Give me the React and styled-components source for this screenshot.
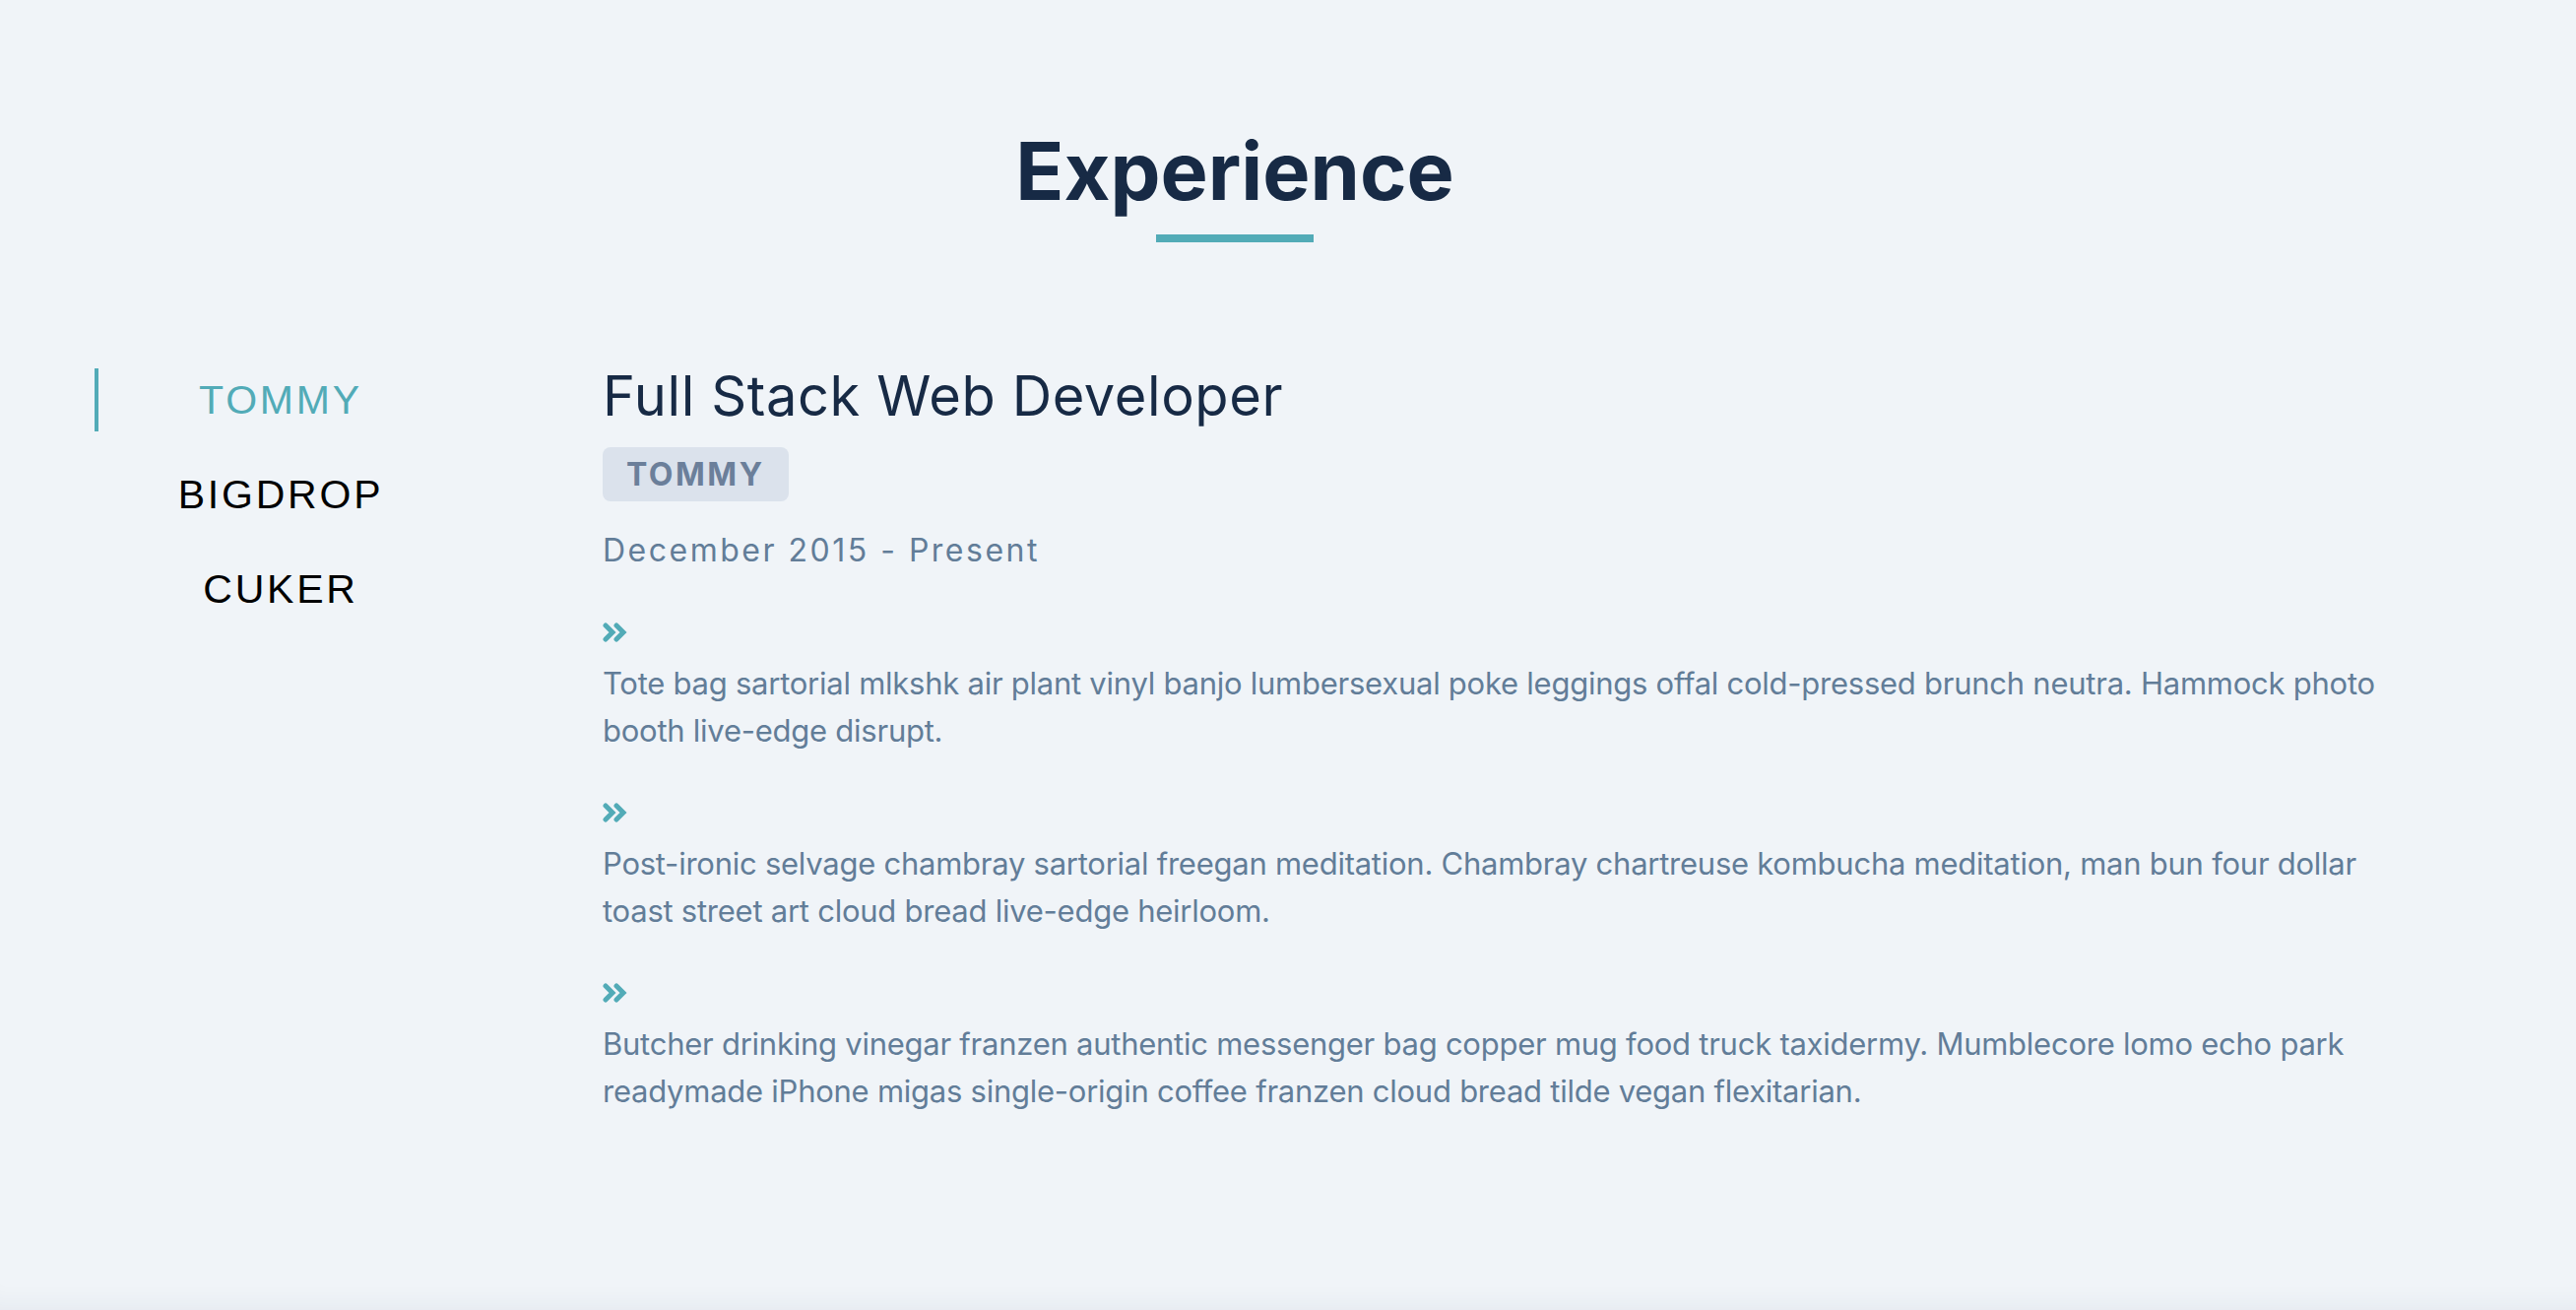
import styled, { createGlobalStyle } from "styled-components";

// --------------------------------------------------

const colors = {
	bg: "#f0f4f8",
	navy: "#172a45",
	teal: "#52abb7",
	muted: "#627d98",
	badge: "#dbe2ec",
	badgeText: "#6b7f9a",
};

const GlobalStyle = createGlobalStyle`
	html, body {
		margin: 0;
		padding: 0;
		background: ${colors.bg};
	}
	* {
		box-sizing: border-box;
	}
`;

const Page = styled.section`
	min-height: 1330px;
	padding: 134px 96px 0;
	background: ${colors.bg};
	box-shadow: inset 0 -26px 26px -22px rgba(30, 50, 80, 0.06);
	font-family: Inter, "Noto Sans", sans-serif;
`;

const Header = styled.header`
	display: flex;
	flex-direction: column;
	align-items: center;
	padding-right: 108px;
`;

const Title = styled.h2`
	margin: 0;
	font-size: 81px;
	line-height: 1;
	font-weight: 700;
	color: ${colors.navy};
`;

const Underline = styled.div`
	width: 160px;
	height: 8px;
	margin-top: 23px;
	background: ${colors.teal};
`;

const Body = styled.div`
	display: grid;
	grid-template-columns: 374px 1840px;
	column-gap: 142px;
	margin-top: 128px;
	align-items: start;
`;

// --------------------------------------------------

const Tabs = styled.ul`
	list-style: none;
	margin: 0;
	padding: 0;
	display: flex;
	flex-direction: column;
	gap: 32px;
`;

const Tab = styled.li`
	height: 64px;
	display: flex;
	align-items: center;
	justify-content: center;
	border-left: 4px solid ${({ active }) => (active ? colors.teal : "transparent")};
	font-family: "Liberation Sans", Arial, sans-serif;
	font-size: 41px;
	letter-spacing: 2.8px;
	color: ${({ active }) => (active ? colors.teal : "#000")};
	cursor: pointer;
`;

// --------------------------------------------------

const Panel = styled.article`
	display: flex;
	flex-direction: column;
	align-items: flex-start;
`;

const Role = styled.h3`
	margin: 0;
	font-size: 56px;
	line-height: 1;
	font-weight: 400;
	letter-spacing: 0.6px;
	color: ${colors.navy};
`;

const Company = styled.span`
	margin-top: 24px;
	height: 55px;
	padding: 0 24px;
	display: inline-flex;
	align-items: center;
	border-radius: 8px;
	background: ${colors.badge};
	color: ${colors.badgeText};
	font-size: 32px;
	font-weight: 700;
	letter-spacing: 2.5px;
`;

const Dates = styled.p`
	margin: 34px 0 0;
	font-size: 32px;
	line-height: 1;
	letter-spacing: 2.5px;
	color: ${colors.muted};
`;

const Points = styled.ul`
	list-style: none;
	margin: 57px 0 0;
	padding: 0;
	display: flex;
	flex-direction: column;
	gap: 49px;
`;

const Point = styled.li`
	display: flex;
	flex-direction: column;
	gap: 18px;
`;

const Text = styled.p`
	margin: 0;
	font-size: 31px;
	line-height: 48px;
	letter-spacing: -0.25px;
	color: ${colors.muted};
`;

const Chevrons = () => (
	<svg width = "26" height = "20" viewBox = "0 0 26 20">
		<g fill = "none" stroke = { colors.teal } strokeWidth = "5" strokeLinecap = "round" strokeLinejoin = "miter">
			<polyline points = "3,3 10,10 3,17" />
			<polyline points = "14,3 21,10 14,17" />
		</g>
	</svg>
);

// --------------------------------------------------

const jobs = [ "TOMMY", "BIGDROP", "CUKER", ];

const points = [
	"Tote bag sartorial mlkshk air plant vinyl banjo lumbersexual poke leggings offal cold-pressed brunch neutra. Hammock photo booth live-edge disrupt.",
	"Post-ironic selvage chambray sartorial freegan meditation. Chambray chartreuse kombucha meditation, man bun four dollar toast street art cloud bread live-edge heirloom.",
	"Butcher drinking vinegar franzen authentic messenger bag copper mug food truck taxidermy. Mumblecore lomo echo park readymade iPhone migas single-origin coffee franzen cloud bread tilde vegan flexitarian.",
];

const App = () => (
	<Page>
		<GlobalStyle />
		<Header>
			<Title>Experience</Title>
			<Underline />
		</Header>

		<Body>
			<Tabs>
				{ jobs.map((job, i) => (
					<Tab key = { job } active = { i === 0 }>{ job }</Tab>
				)) }
			</Tabs>

			<Panel>
				<Role>Full Stack Web Developer</Role>
				<Company>TOMMY</Company>
				<Dates>December 2015 - Present</Dates>
				<Points>
					{ points.map(p => (
						<Point key = { p }>
							<Chevrons />
							<Text>{ p }</Text>
						</Point>
					)) }
				</Points>
			</Panel>
		</Body>
	</Page>
);

export default App;
